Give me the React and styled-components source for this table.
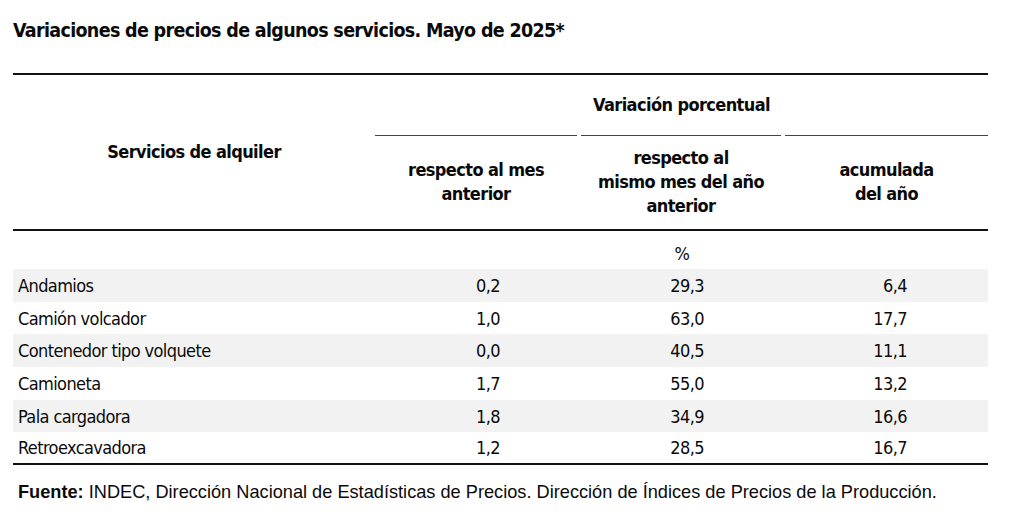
import React from 'react';
import styled, { createGlobalStyle } from 'styled-components';

const GlobalStyle = createGlobalStyle`
    html, body {
        margin: 0;
        padding: 0;
        background: #ffffff;
    }
`;

const rows = [
    { name: 'Andamios', mes: '0,2', anio: '29,3', acum: '6,4' },
    { name: 'Camión volcador', mes: '1,0', anio: '63,0', acum: '17,7' },
    { name: 'Contenedor tipo volquete', mes: '0,0', anio: '40,5', acum: '11,1' },
    { name: 'Camioneta', mes: '1,7', anio: '55,0', acum: '13,2' },
    { name: 'Pala cargadora', mes: '1,8', anio: '34,9', acum: '16,6' },
    { name: 'Retroexcavadora', mes: '1,2', anio: '28,5', acum: '16,7' },
];

const App = () => {
    return (
        <Page>
            <GlobalStyle />
            <Title>Variaciones de precios de algunos servicios. Mayo de 2025*</Title>
            <Table>
                <StubHead>Servicios de alquiler</StubHead>
                <GroupHead>Variación porcentual</GroupHead>
                <SubHead>
                    <SubLabel>respecto al mes<br />anterior</SubLabel>
                </SubHead>
                <SubHead>
                    <SubLabel>respecto al<br />mismo mes del año<br />anterior</SubLabel>
                </SubHead>
                <SubHead $last>
                    <SubLabel>acumulada<br />del año</SubLabel>
                </SubHead>
                <UnitRow>
                    <span />
                    <span />
                    <Unit>%</Unit>
                    <span />
                </UnitRow>
                {rows.map((row, i) => (
                    <DataRow key={row.name} $shaded={i % 2 === 0} $last={i === rows.length - 1}>
                        <Label>{row.name}</Label>
                        <Value>{row.mes}</Value>
                        <Value>{row.anio}</Value>
                        <Value>{row.acum}</Value>
                    </DataRow>
                ))}
            </Table>
            <Source>
                <strong>Fuente:</strong> INDEC, Dirección Nacional de Estadísticas de Precios. Dirección de Índices de Precios de la Producción.
            </Source>
        </Page>
    );
};

export default App;

const condensed = `
    font-family: "Liberation Sans Narrow", "DejaVu Sans Condensed", "Liberation Sans", Arial, sans-serif;
    font-stretch: condensed;
`;

const Page = styled.div`
    padding: 19px 36px 0 13px;
    color: #0a0a0a;
`;

const Title = styled.h1`
    ${condensed}
    margin: 0;
    font-size: 19.5px;
    font-weight: 700;
    letter-spacing: -0.68px;
    line-height: 24px;
`;

const Table = styled.div`
    ${condensed}
    margin-top: 30px;
    display: grid;
    grid-template-columns: 362px 206px 204px 203px;
    grid-template-rows: 60px 94px;
    border-top: 2px solid #111111;
    font-size: 18px;
    letter-spacing: -0.6px;
`;

const StubHead = styled.div`
    grid-row: 1 / span 2;
    display: flex;
    align-items: center;
    justify-content: center;
    font-weight: 700;
    padding-bottom: 2px;
`;

const GroupHead = styled.div`
    grid-column: 2 / span 3;
    display: flex;
    align-items: center;
    justify-content: center;
    font-weight: 700;
    padding-bottom: 2px;
`;

const SubHead = styled.div`
    display: flex;
    align-items: center;
    justify-content: center;
    border-top: 1.5px solid #444444;
    margin-right: ${(p) => (p.$last ? '0' : '4px')};
`;

const SubLabel = styled.div`
    font-weight: 700;
    text-align: center;
    line-height: 24px;
    padding-bottom: 2px;
`;

const UnitRow = styled.div`
    grid-column: 1 / -1;
    display: grid;
    grid-template-columns: subgrid;
    height: 38px;
    border-top: 2px solid #111111;
    align-items: center;
`;

const Unit = styled.span`
    text-align: center;
    padding-right: 2px;
    padding-top: 6px;
`;

const DataRow = styled.div`
    grid-column: 1 / -1;
    display: grid;
    grid-template-columns: subgrid;
    align-items: center;
    height: ${(p) => (p.$last ? '31px' : '32.7px')};
    background: ${(p) => (p.$shaded ? '#f2f2f2' : 'transparent')};
    border-bottom: ${(p) => (p.$last ? '2px solid #111111' : 'none')};
`;

const Label = styled.span`
    padding-left: 5px;
`;

const Value = styled.span`
    text-align: right;
    padding-right: 81px;
`;

const Source = styled.p`
    margin: 16px 0 0 5px;
    font-family: "Liberation Sans", Arial, sans-serif;
    font-size: 18.2px;
    line-height: 22px;
`;
